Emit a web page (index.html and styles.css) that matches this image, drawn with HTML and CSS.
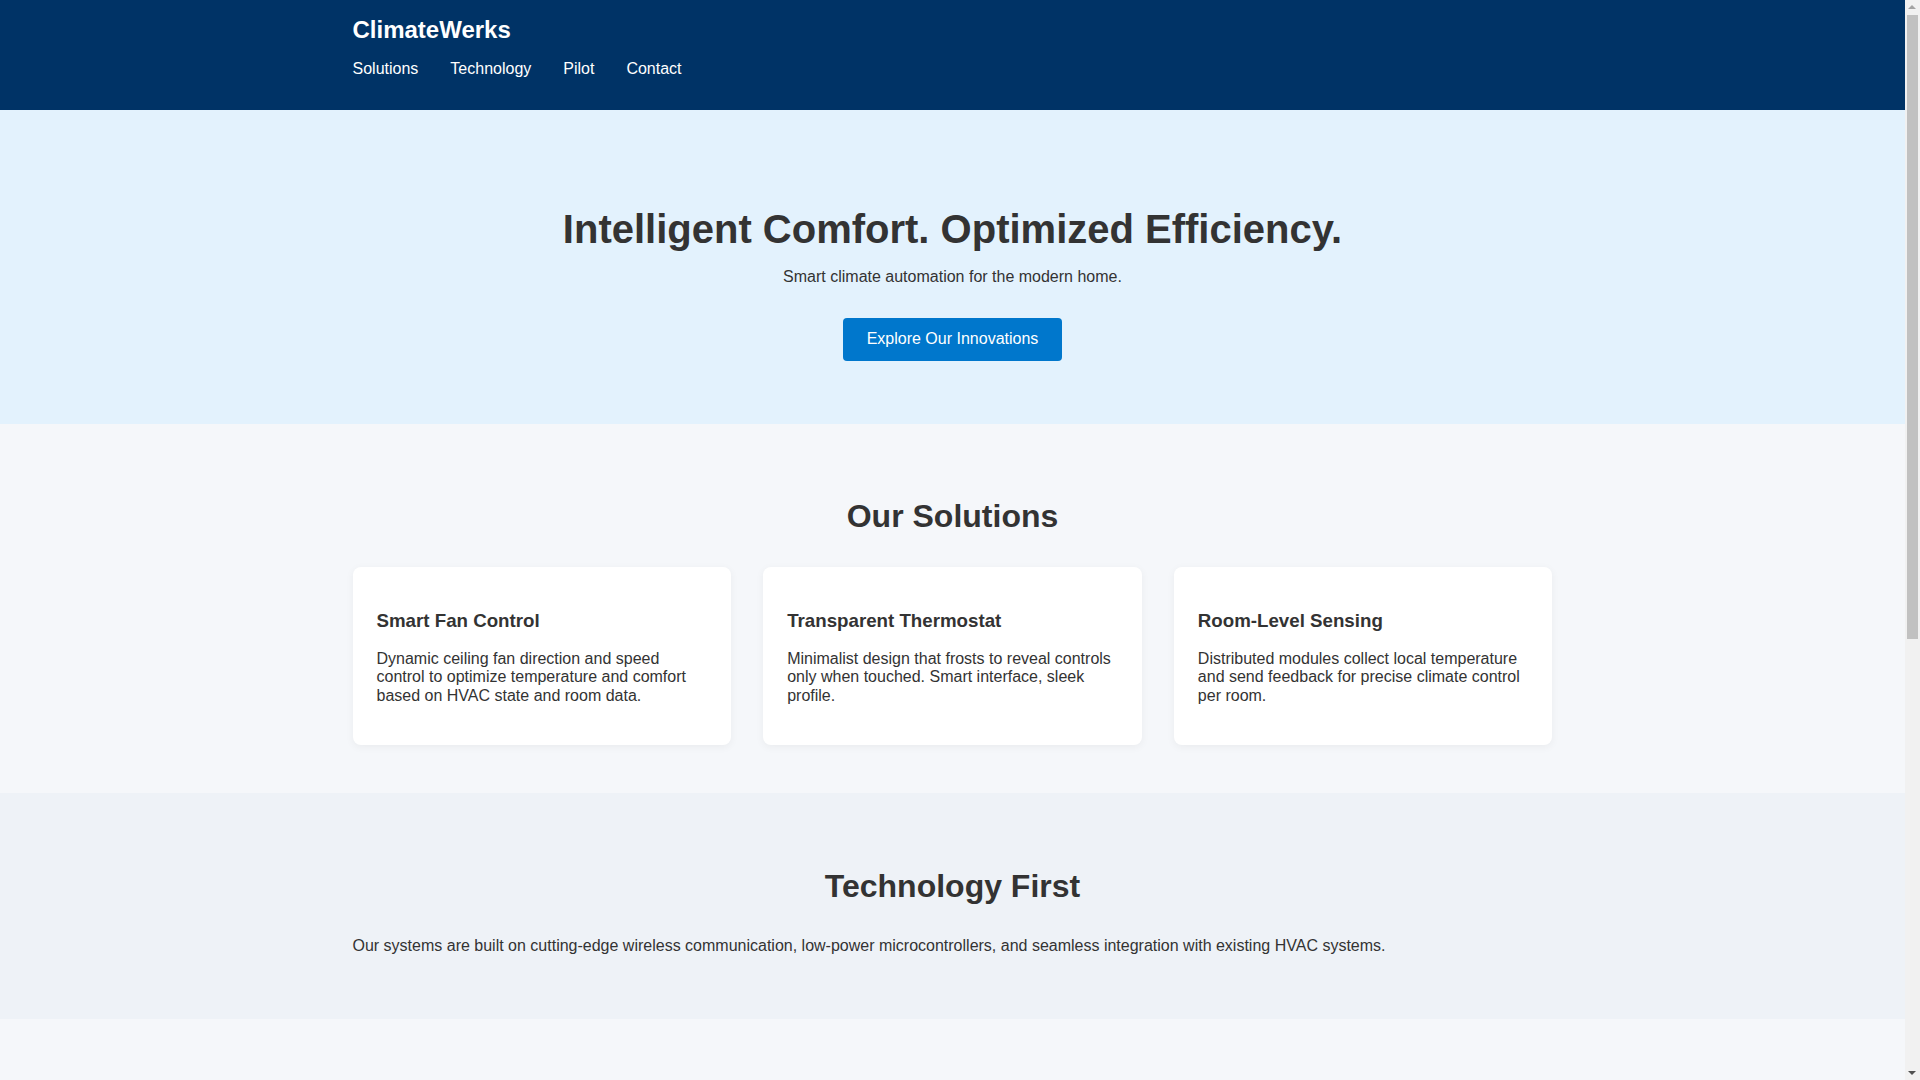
FILE: index.html
```html
<!DOCTYPE html>
<html lang="en">
<head>
<meta charset="utf-8">
<title>ClimateWerks</title>
<link rel="stylesheet" href="styles.css">
</head>
<body>
<header class="site-header">
  <div class="container">
    <h1 class="logo">ClimateWerks</h1>
    <nav>
      <ul class="nav-list">
        <li><a href="#solutions">Solutions</a></li>
        <li><a href="#technology">Technology</a></li>
        <li><a href="#pilot">Pilot</a></li>
        <li><a href="#contact">Contact</a></li>
      </ul>
    </nav>
  </div>
</header>

<section class="hero">
  <h2 class="hero-title">Intelligent Comfort. Optimized Efficiency.</h2>
  <p class="hero-sub">Smart climate automation for the modern home.</p>
  <a class="btn" href="#solutions">Explore Our Innovations</a>
</section>

<section class="section" id="solutions">
  <div class="container">
    <h2 class="section-title">Our Solutions</h2>
    <div class="cards">
      <div class="card">
        <h3>Smart Fan Control</h3>
        <p>Dynamic ceiling fan direction and speed control to optimize temperature and comfort based on HVAC state and room data.</p>
      </div>
      <div class="card">
        <h3>Transparent Thermostat</h3>
        <p>Minimalist design that frosts to reveal controls only when touched. Smart interface, sleek profile.</p>
      </div>
      <div class="card">
        <h3>Room-Level Sensing</h3>
        <p>Distributed modules collect local temperature and send feedback for precise climate control per room.</p>
      </div>
    </div>
  </div>
</section>

<section class="section section-alt" id="technology">
  <div class="container">
    <h2 class="section-title">Technology First</h2>
    <p>Our systems are built on cutting-edge wireless communication, low-power microcontrollers, and seamless integration with existing HVAC systems.</p>
  </div>
</section>

<section class="section" id="pilot">
  <div class="container">
    <h2 class="section-title">Pilot Program</h2>
    <p>We're partnering with select homeowners and builders to test ClimateWerks in real-world environments. Join our pilot and help shape the future of home comfort.</p>
    <a class="btn" href="#contact">Apply for the Pilot</a>
  </div>
</section>

<section class="section section-alt" id="contact">
  <div class="container">
    <h2 class="section-title">Contact Us</h2>
    <form class="contact-form">
      <input type="text" placeholder="Your Name">
      <input type="email" placeholder="Your Email">
      <textarea placeholder="Your Message"></textarea>
      <button type="button" class="btn">Send Message</button>
    </form>
  </div>
</section>

<footer class="site-footer">
  <p>&copy; 2024 ClimateWerks. All rights reserved.</p>
</footer>

<div class="scrollbar" aria-hidden="true">
  <span class="sb-up"></span>
  <span class="sb-thumb"></span>
  <span class="sb-down"></span>
</div>
</body>
</html>
```

FILE: styles.css
```css
* { box-sizing: border-box; }

html {
  background: #f5f7fa;
}

body {
  margin: 0 15px 0 0;
  font-family: "Liberation Sans", Arial, Helvetica, sans-serif;
  color: #333;
  background: #f5f7fa;
  line-height: 1.15;
}

.container {
  max-width: 1200px;
  margin: 0 auto;
}

.site-header {
  background: #003366;
  color: #fff;
  padding: 1rem 0;
}

.logo {
  margin: 0;
  font-size: 1.5rem;
  font-weight: bold;
}

.nav-list {
  list-style: none;
  display: flex;
  gap: 2rem;
  margin: 1rem 0;
  padding: 0;
}

.nav-list a {
  color: #fff;
  text-decoration: none;
}

.hero {
  background: #e3f2fd;
  padding: 4rem 2rem 63px;
  text-align: center;
  display: flex;
  flex-direction: column;
  align-items: center;
}

.hero-title {
  font-size: 2.5rem;
  margin: 32px 0 16px;
}

.hero-sub {
  margin: 0 0 32px;
  font-size: 1rem;
}

.btn {
  display: inline-block;
  background: #0077cc;
  color: #fff;
  text-decoration: none;
  padding: 0.75rem 1.5rem;
  border-radius: 4px;
  border: none;
  font-family: inherit;
  font-size: 1rem;
  line-height: 1.15;
}

.section {
  padding: 3rem 0;
}

.section-alt {
  background: #eef2f7;
}

.section-title {
  font-size: 2rem;
  text-align: center;
  margin: 0.83em 0 2rem;
}

.cards {
  display: grid;
  grid-template-columns: repeat(3, 1fr);
  gap: 2rem;
}

.card {
  background: #fff;
  border-radius: 8px;
  padding: 1.5rem;
  box-shadow: 0 2px 8px rgba(0, 0, 0, 0.05);
}

.card h3 {
  font-size: 1.17em;
  margin: 1em 0;
}

.card p {
  margin: 1rem 0;
}

.contact-form {
  display: flex;
  flex-direction: column;
  gap: 1rem;
  max-width: 600px;
  margin: 0 auto;
}

.contact-form input,
.contact-form textarea {
  font-family: inherit;
  font-size: 1rem;
  padding: 0.75rem;
  border: 1px solid #ccc;
  border-radius: 4px;
  background: #fff;
}

.contact-form textarea {
  height: 120px;
  resize: vertical;
}

.contact-form .btn {
  align-self: flex-start;
  cursor: pointer;
}

.site-footer {
  background: #003366;
  color: #fff;
  text-align: center;
  padding: 1rem 0;
}

.site-footer p {
  margin: 0;
}

/* Simulated browser scrollbar overlaying the right edge */
.scrollbar {
  position: fixed;
  top: 0;
  right: 0;
  width: 15px;
  height: 100vh;
  background: #f1f1f1;
}

.sb-thumb {
  position: absolute;
  top: 15px;
  left: 2px;
  right: 2px;
  height: 624px;
  background: #c1c1c1;
}

.sb-up,
.sb-down {
  position: absolute;
  left: 3px;
  width: 0;
  height: 0;
  border-left: 4.5px solid transparent;
  border-right: 4.5px solid transparent;
}

.sb-up {
  top: 5px;
  border-bottom: 4px solid #a3a3a3;
}

.sb-down {
  bottom: 5px;
  border-top: 4px solid #505050;
}
```
